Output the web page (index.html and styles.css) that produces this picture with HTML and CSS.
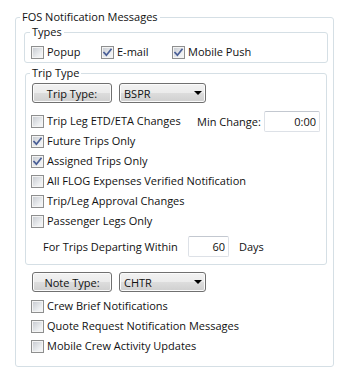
FILE: index.html
```html
<!DOCTYPE html>
<html lang="en">
<head>
  <meta charset="UTF-8">
  <meta name="viewport" content="width=device-width, initial-scale=1.0">
  <title>FOS Notification Messages</title>
  <link rel="stylesheet" href="styles.css">
</head>
<body>
  <fieldset class="group outer">
    <legend>FOS Notification Messages</legend>

    <fieldset class="group types">
      <legend>Types</legend>
      <div class="type-row">
        <label class="check"><span class="box"></span>Popup</label>
        <label class="check"><span class="box"><svg viewBox="0 0 11 11"><path d="M2 5.6 L4.4 8.2 L9 2.4"/></svg></span>E-mail</label>
        <label class="check"><span class="box"><svg viewBox="0 0 11 11"><path d="M2 5.6 L4.4 8.2 L9 2.4"/></svg></span>Mobile Push</label>
      </div>
    </fieldset>

    <fieldset class="group trip">
      <legend>Trip Type</legend>
      <div class="picker">
        <button class="btn">Trip Type:</button>
        <div class="combo">BSPR<span class="arrow"></span></div>
      </div>

      <div class="rows first">
        <div class="row">
          <label class="check wide"><span class="box"></span>Trip Leg ETD/ETA Changes</label>
          <span class="min-label">Min Change:</span>
          <input class="field min" type="text" value="0:00">
        </div>
        <div class="row">
          <label class="check"><span class="box"><svg viewBox="0 0 11 11"><path d="M2 5.6 L4.4 8.2 L9 2.4"/></svg></span>Future Trips Only</label>
        </div>
        <div class="row">
          <label class="check"><span class="box"><svg viewBox="0 0 11 11"><path d="M2 5.6 L4.4 8.2 L9 2.4"/></svg></span>Assigned Trips Only</label>
        </div>
        <div class="row">
          <label class="check"><span class="box"></span>All FLOG Expenses Verified Notification</label>
        </div>
        <div class="row">
          <label class="check"><span class="box"></span>Trip/Leg Approval Changes</label>
        </div>
        <div class="row">
          <label class="check"><span class="box"></span>Passenger Legs Only</label>
        </div>
      </div>

      <div class="within">
        <span class="within-label">For Trips Departing Within</span>
        <input class="field days" type="text" value="60">
        <span class="days-label">Days</span>
      </div>
    </fieldset>

    <div class="picker note">
      <button class="btn">Note Type:</button>
      <div class="combo">CHTR<span class="arrow"></span></div>
    </div>

    <div class="rows notes">
      <div class="row">
        <label class="check"><span class="box"></span>Crew Brief Notifications</label>
      </div>
      <div class="row">
        <label class="check"><span class="box"></span>Quote Request Notification Messages</label>
      </div>
      <div class="row">
        <label class="check"><span class="box"></span>Mobile Crew Activity Updates</label>
      </div>
    </div>
  </fieldset>
</body>
</html>
```

FILE: styles.css
```css
body {
  margin: 0;
  font-family: "Open Sans", "Noto Sans", sans-serif;
  font-size: 11px;
  color: #111;
  background-color: #fff;
}

.group {
  border: 1px solid #d5dfe5;
  border-radius: 3px;
  margin: 0;
  padding: 0;
  min-width: 0;
}

.group > legend {
  padding: 0 2px;
  margin-left: -1px;
  line-height: 16px;
}

.outer {
  box-sizing: border-box;
  width: 319px;
  margin: 9px 0 0 15px;
  padding: 0 5px 10px 8px;
}

.outer > legend {
  margin-left: -4px;
}

.types {
  margin-top: -1px;
  padding: 3px 0 1px 6px;
}

.type-row {
  display: grid;
  grid-template-columns: 70px 71px auto;
}

.check {
  display: flex;
  align-items: center;
  gap: 3px;
  line-height: 18px;
  white-space: nowrap;
}

.box {
  box-sizing: border-box;
  width: 13px;
  height: 13px;
  flex: 0 0 13px;
  display: flex;
  align-items: center;
  justify-content: center;
  border: 1px solid #8e8f8f;
  background: linear-gradient(135deg, #c4c8ce, #eef0f2 70%, #f6f6f6);
  box-shadow: inset 0 0 0 1px #f4f4f4;
}

.box svg {
  width: 11px;
  height: 11px;
}

.box path {
  fill: none;
  stroke: #4a5f97;
  stroke-width: 1.7;
  stroke-linecap: square;
}

.trip {
  margin: 2px 1px 0;
  padding: 2px 0 7px 5px;
}

.picker {
  display: flex;
  gap: 7px;
  margin-left: 1px;
}

.btn,
.combo {
  box-sizing: border-box;
  height: 20px;
  border: 1px solid #707070;
  border-radius: 3px;
  background: linear-gradient(#f2f2f2 0%, #ebebeb 50%, #dddddd 50%, #cfcfcf 100%);
  box-shadow: inset 0 0 0 1px #fbfbfb;
  font: inherit;
  color: inherit;
}

.btn {
  width: 80px;
  padding: 0;
}

.combo {
  width: 87px;
  display: flex;
  align-items: center;
  justify-content: space-between;
  padding: 0 3px 0 4px;
}

.arrow {
  width: 0;
  height: 0;
  border-left: 4px solid transparent;
  border-right: 4px solid transparent;
  border-top: 4px solid #000;
}

.rows.first {
  margin-top: 8px;
}

.row {
  display: flex;
  align-items: center;
  height: 20px;
}

.check.wide {
  flex: 0 0 166px;
}

.min-label {
  width: 67px;
}

.field {
  box-sizing: border-box;
  height: 21px;
  border: 1px solid #dde1e7;
  border-top-color: #c3c8d0;
  border-radius: 2px;
  padding: 0 3px;
  text-align: right;
  font: inherit;
  color: inherit;
}

.field.min {
  width: 56px;
}

.within {
  display: flex;
  align-items: center;
  margin-top: 5px;
  padding-left: 12px;
}

.within-label {
  width: 145px;
}

.field.days {
  width: 41px;
}

.days-label {
  margin-left: 10px;
}

.picker.note {
  margin: 7px 0 0 8px;
}

.rows.notes {
  margin-top: 4px;
  padding-left: 7px;
}
```
